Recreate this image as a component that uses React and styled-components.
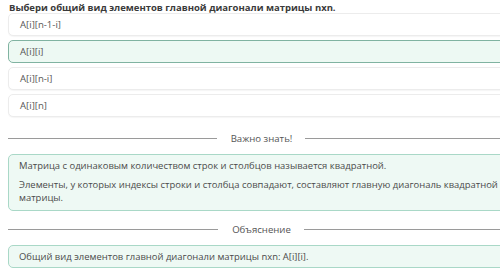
import React from "react";
import styled, { createGlobalStyle } from "styled-components";

const Global = createGlobalStyle`
  html, body { margin: 0; padding: 0; background: #fff; }
  body { font-family: "Open Sans", "Noto Sans", sans-serif; }
`;

const Frame = styled.div`
  width: 500px;
  height: 271px;
  overflow: hidden;
`;

const Page = styled.div`
  width: 506px;
  padding: 1px 0 0 8px;
  display: flex;
  flex-direction: column;
`;

const Title = styled.div`
  font-size: 9.5px;
  font-weight: 700;
  color: #3a3a3a;
  line-height: 13px;
  padding-left: 1px;
  white-space: nowrap;
`;

const Options = styled.div`
  display: flex;
  flex-direction: column;
  gap: 4px;
  margin-top: -1px;
`;

const Option = styled.div`
  height: 23px;
  box-sizing: border-box;
  display: flex;
  align-items: center;
  padding-left: 11px;
  font-size: 9.6px;
  color: #555;
  border-radius: 5px;
  border: 1px solid ${(p) => (p.$selected ? "#80b3a1" : "#ececec")};
  background: ${(p) => (p.$selected ? "#edf9f3" : "#fff")};
  box-shadow: ${(p) => (p.$selected ? "none" : "0 1px 1px rgba(0,0,0,0.04)")};
`;

const Divider = styled.div`
  display: flex;
  align-items: center;
  margin: ${(p) => p.$margin};
  font-size: 9.6px;
  color: #555;
  line-height: 13px;
`;

const Line = styled.div`
  flex: 1;
  height: 1px;
  background: #9a9a9a;
`;

const DividerText = styled.span`
  margin: 0 13px 0 14px;
`;

const Note = styled.div`
  box-sizing: border-box;
  border: 1px solid #a9d8c7;
  background: #eef9f4;
  border-radius: 5px;
  padding: ${(p) => p.$pad};
  font-size: 9.45px;
  line-height: 13px;
  color: #4a4a4a;
`;

const Para = styled.p`
  margin: 0;
  & + & { margin-top: 6px; }
`;

const options = ["A[i][n-1-i]", "A[i][i]", "A[i][n-i]", "A[i][n]"];

export default function App() {
  return (
    <>
      <Global />
      <Frame>
        <Page>
          <Title>Выбери общий вид элементов главной диагонали матрицы nxn.</Title>
          <Options>
            {options.map((o, i) => (
              <Option key={o} $selected={i === 1}>
                {o}
              </Option>
            ))}
          </Options>
          <Divider $margin="15px 0 9px">
            <Line />
            <DividerText>Важно знать!</DividerText>
            <Line />
          </Divider>
          <Note $pad="4px 10px 6px">
            <Para>Матрица с одинаковым количеством строк и столбцов называется квадратной.</Para>
            <Para>
              Элементы, у которых индексы строки и столбца совпадают, составляют главную диагональ квадратной
              матрицы.
            </Para>
          </Note>
          <Divider $margin="12px 0 9px">
            <Line />
            <DividerText>Объяснение</DividerText>
            <Line />
          </Divider>
          <Note $pad="4px 10px 4px">
            <Para>Общий вид элементов главной диагонали матрицы nxn: A[i][i].</Para>
          </Note>
        </Page>
      </Frame>
    </>
  );
}
